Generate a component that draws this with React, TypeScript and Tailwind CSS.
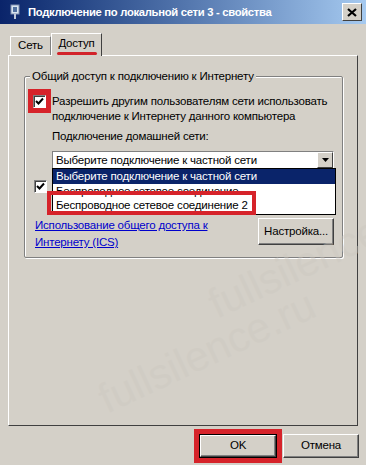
import React from "react";

const font = { fontFamily: '"Liberation Sans", Arial, sans-serif' };

function CheckBox() {
  return (
    <span className="flex h-[13px] w-[13px] shrink-0 items-center justify-center border-t border-l border-t-[#808080] border-l-[#808080] border-r border-b border-r-white border-b-white bg-white shadow-[inset_1px_1px_0_#404040]">
      <svg width="9" height="9" viewBox="0 0 9 9">
        <path d="M1 4 L3.5 6.5 L8 1.5" stroke="#000" strokeWidth="2" fill="none" />
      </svg>
    </span>
  );
}

function Button({ children, className = "" }: { children: React.ReactNode; className?: string }) {
  return (
    <div
      className={`flex items-center justify-center whitespace-nowrap bg-[#d4d0c8] border border-t-white border-l-white border-r-[#404040] border-b-[#404040] shadow-[inset_-1px_-1px_0_#808080] text-[11.5px] tracking-[-0.2px] text-black ${className}`}
    >
      {children}
    </div>
  );
}

export default function App() {
  return (
    <div className="relative h-[465px] w-[366px] overflow-hidden bg-[#d4d0c8] text-black" style={font}>
      {/* title bar */}
      <div className="flex h-[24px] items-center bg-gradient-to-r from-[#0a246a] to-[#a6caf0] pl-[10px] pr-[4px]">
        <svg width="10" height="16" viewBox="0 0 10 16" className="shrink-0">
          <rect x="1" y="1" width="8" height="9" fill="#d8e4f0" stroke="#8090b0" />
          <rect x="3" y="3" width="4" height="5" fill="#5070a0" />
          <rect x="4" y="10" width="2" height="5" fill="#c0c8d8" />
        </svg>
        <span className="ml-[8px] whitespace-nowrap text-[11.25px] font-bold tracking-[-0.3px] text-white">
          Подключение по локальной сети 3 - свойства
        </span>
        <div className="ml-auto flex h-[18px] w-[20px] items-center justify-center border border-t-white border-l-white border-r-[#404040] border-b-[#404040] bg-[#d4d0c8]">
          <svg width="10" height="9" viewBox="0 0 10 9">
            <path d="M1 1 L9 8 M9 1 L1 8" stroke="#000" strokeWidth="2.2" />
          </svg>
        </div>
      </div>

      {/* tabs */}
      <div className="flex h-[31px] items-end pl-[10px] text-[11.5px] tracking-[-0.2px]">
        <div className="flex h-[19px] w-[41px] items-center justify-center border-t border-l border-t-white border-l-white border-r border-r-[#808080]">
          Сеть
        </div>
        <div className="relative z-10 -mb-px flex h-[23px] w-[51px] flex-col items-center justify-center border-t border-l border-t-white border-l-white border-r border-r-[#404040] bg-[#d4d0c8]">
          <span className="leading-[14px]">Доступ</span>
          <span className="mt-[2px] h-[3px] w-[40px] rounded-full bg-[#d2232a]" />
        </div>
      </div>

      {/* tab panel */}
      <div className="ml-[8px] flex h-[371px] w-[350px] flex-col border border-t-white border-l-white border-r-[#404040] border-b-[#404040] pt-[20px] pl-[15px] text-[11.5px] tracking-[-0.2px]">
        {/* group box */}
        <div className="relative h-[182px] w-[319px] rounded-[2px] border border-[#808080] shadow-[1px_1px_0_white,inset_1px_1px_0_white]">
          <span className="absolute -top-[8px] left-[5px] whitespace-nowrap bg-[#d4d0c8] px-[2px] leading-[15px]">
            Общий доступ к подключению к Интернету
          </span>

          <div className="mt-[12px] flex items-start">
            <div className="ml-[3px] flex h-[24px] w-[23px] items-center justify-center bg-[#d6232a]">
              <CheckBox />
            </div>
            <div className="ml-[1px] mt-[5px] whitespace-nowrap leading-[15px]">
              Разрешить другим пользователям сети использовать
              <br />
              подключение к Интернету данного компьютера
            </div>
          </div>

          <div className="ml-[27px] mt-[5px] leading-[15px]">Подключение домашней сети:</div>

          {/* combo */}
          <div className="relative ml-[27px] mt-[7px] w-[282px]">
            <div className="flex h-[18px] items-center border border-t-[#808080] border-l-[#808080] border-r-white border-b-white bg-white pl-[3px]">
              <span className="whitespace-nowrap leading-[15px]">Выберите подключение к частной сети</span>
              <div className="ml-auto flex h-[16px] w-[16px] items-center justify-center border border-t-white border-l-white border-r-[#404040] border-b-[#404040] bg-[#d4d0c8]">
                <svg width="7" height="4" viewBox="0 0 7 4">
                  <path d="M0 0 H7 L3.5 4 Z" fill="#000" />
                </svg>
              </div>
            </div>

            {/* open list */}
            <div className="absolute left-0 top-[17px] z-20 w-[284px] whitespace-nowrap border border-black bg-white leading-[15px]">
              <div className="bg-[#0a246a] pl-[3px] text-white">Выберите подключение к частной сети</div>
              <div className="h-[14px] overflow-hidden pl-[3px]">Беспроводное сетевое соединение</div>
              <div className="pl-[3px] pb-[1px]">Беспроводное сетевое соединение 2</div>
            </div>
            {/* red mark */}
            <div className="absolute -left-[5px] top-[40px] z-30 h-[24px] w-[209px] border-[4px] border-[#d6232a]" />
          </div>

          <div className="ml-[9px] mt-[11px]">
            <CheckBox />
          </div>

          <div className="mt-[24px] flex items-start">
            <div className="ml-[10px] whitespace-nowrap leading-[17px] text-[#0000cc] underline">
              Использование общего доступа к
              <br />
              Интернету (ICS)
            </div>
            <Button className="ml-auto mr-[8px] mt-[1px] h-[27px] w-[76px]">Настройка...</Button>
          </div>
        </div>
      </div>

      {/* watermark */}
      <div className="pointer-events-none absolute left-[200px] top-[225px] -rotate-[25deg] text-[42px] text-[#ccc8c0] opacity-40">
        fullsilence.ru
      </div>
      <div className="pointer-events-none absolute left-[90px] top-[320px] -rotate-[25deg] text-[42px] text-[#ccc8c0] opacity-40">
        fullsilence.ru
      </div>

      {/* buttons */}
      <div className="mt-[3px] flex items-start pl-[194px]">
        <div className="flex h-[34px] w-[88px] items-center justify-center bg-[#d6232a]">
          <Button className="h-[22px] w-[76px] outline outline-1 outline-black">OK</Button>
        </div>
        <Button className="ml-[1px] mt-[5px] h-[24px] w-[76px]">Отмена</Button>
      </div>
    </div>
  );
}
